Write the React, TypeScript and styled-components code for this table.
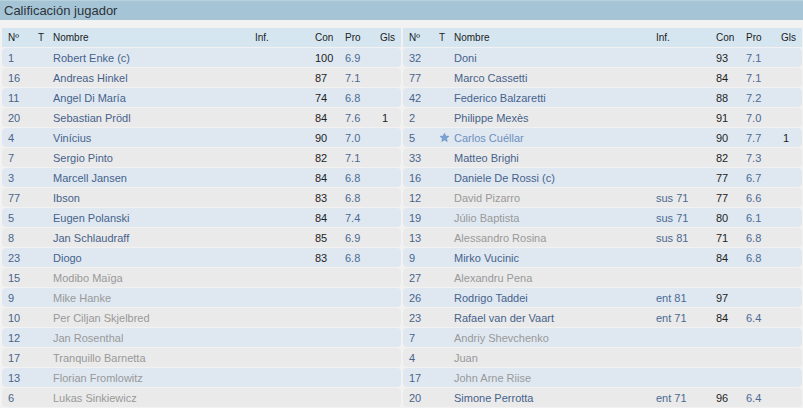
import React from "react";
import styled, { createGlobalStyle } from "styled-components";

const Global = createGlobalStyle`
  html, body { margin: 0; padding: 0; background: #f2f2f2; }
  body { font-family: "Liberation Sans", Arial, sans-serif; }
`;

type Player = {
  n: string;
  name: string;
  inf?: string;
  con?: string;
  pro?: string;
  gls?: string;
  dim?: boolean;
  star?: boolean;
};

const left: Player[] = [
  { n: "1", name: "Robert Enke (c)", con: "100", pro: "6.9" },
  { n: "16", name: "Andreas Hinkel", con: "87", pro: "7.1" },
  { n: "11", name: "Angel Di María", con: "74", pro: "6.8" },
  { n: "20", name: "Sebastian Prödl", con: "84", pro: "7.6", gls: "1" },
  { n: "4", name: "Vinícius", con: "90", pro: "7.0" },
  { n: "7", name: "Sergio Pinto", con: "82", pro: "7.1" },
  { n: "3", name: "Marcell Jansen", con: "84", pro: "6.8" },
  { n: "77", name: "Ibson", con: "83", pro: "6.8" },
  { n: "5", name: "Eugen Polanski", con: "84", pro: "7.4" },
  { n: "8", name: "Jan Schlaudraff", con: "85", pro: "6.9" },
  { n: "23", name: "Diogo", con: "83", pro: "6.8" },
  { n: "15", name: "Modibo Maïga", dim: true },
  { n: "9", name: "Mike Hanke", dim: true },
  { n: "10", name: "Per Ciljan Skjelbred", dim: true },
  { n: "12", name: "Jan Rosenthal", dim: true },
  { n: "17", name: "Tranquillo Barnetta", dim: true },
  { n: "13", name: "Florian Fromlowitz", dim: true },
  { n: "6", name: "Lukas Sinkiewicz", dim: true },
];

const right: Player[] = [
  { n: "32", name: "Doni", con: "93", pro: "7.1" },
  { n: "77", name: "Marco Cassetti", con: "84", pro: "7.1" },
  { n: "42", name: "Federico Balzaretti", con: "88", pro: "7.2" },
  { n: "2", name: "Philippe Mexès", con: "91", pro: "7.0" },
  { n: "5", name: "Carlos Cuéllar", con: "90", pro: "7.7", gls: "1", star: true },
  { n: "33", name: "Matteo Brighi", con: "82", pro: "7.3" },
  { n: "16", name: "Daniele De Rossi (c)", con: "77", pro: "6.7" },
  { n: "12", name: "David Pizarro", inf: "sus 71", con: "77", pro: "6.6", dim: true },
  { n: "19", name: "Júlio Baptista", inf: "sus 71", con: "80", pro: "6.1", dim: true },
  { n: "13", name: "Alessandro Rosina", inf: "sus 81", con: "71", pro: "6.8", dim: true },
  { n: "9", name: "Mirko Vucinic", con: "84", pro: "6.8" },
  { n: "27", name: "Alexandru Pena", dim: true },
  { n: "26", name: "Rodrigo Taddei", inf: "ent 81", con: "97" },
  { n: "23", name: "Rafael van der Vaart", inf: "ent 71", con: "84", pro: "6.4" },
  { n: "7", name: "Andriy Shevchenko", dim: true },
  { n: "4", name: "Juan", dim: true },
  { n: "17", name: "John Arne Riise", dim: true },
  { n: "20", name: "Simone Perrotta", inf: "ent 71", con: "96", pro: "6.4" },
];

const Page = styled.div`
  width: 803px;
  height: 408px;
  overflow: hidden;
  background: #f2f2f2;
`;

const TitleBar = styled.div`
  height: 20px;
  background: #a5c5d7;
  border-top: 1px solid #b7d1df;
  box-sizing: border-box;
  padding-left: 4px;
  display: flex;
  align-items: center;
  font-size: 13px;
  color: #2e3338;
`;

const Columns = styled.div`
  display: flex;
  gap: 2px;
  padding: 8px 1px 0 2px;
`;

const Table = styled.div`
  flex: 1;
  display: flex;
  flex-direction: column;
`;

const Row = styled.div<{ $variant: "head" | "blue" | "grey" }>`
  display: grid;
  grid-template-columns: 30px 15px 202px 60px 30px 35px 1fr;
  align-items: center;
  height: 19px;
  margin-bottom: 1px;
  padding-left: 6px;
  border-radius: ${(p) => (p.$variant === "head" ? "0" : "4px")};
  background: ${(p) =>
    p.$variant === "head" ? "#d5e6f1" : p.$variant === "blue" ? "#dfe8f1" : "#eaeaea"};
  font-size: ${(p) => (p.$variant === "head" ? "10px" : "11px")};
  white-space: nowrap;
`;

const HeadCell = styled.span`
  color: #222;
`;

const Num = styled.span`
  color: #48648c;
`;

const Name = styled.span<{ $dim?: boolean; $star?: boolean }>`
  color: ${(p) => (p.$dim ? "#999" : p.$star ? "#6e8fbe" : "#46628b")};
`;

const Inf = styled.span`
  color: #4a6893;
`;

const Con = styled.span`
  color: #1e1e1e;
`;

const Pro = styled.span`
  color: #4a6893;
`;

const Gls = styled.span`
  color: #1e1e1e;
  padding-left: 2px;
`;

const StarCell = styled.span`
  display: flex;
  align-items: center;
`;

const Star = () => (
  <svg width="11" height="11" viewBox="0 0 24 24">
    <path
      d="M12 2.5l2.9 6.3 6.9.7-5.2 4.6 1.5 6.8L12 17.4l-6.1 3.5 1.5-6.8-5.2-4.6 6.9-.7z"
      fill="#7da3d4"
      stroke="#5f87bd"
      strokeWidth="1"
      strokeLinejoin="round"
    />
  </svg>
);

const PlayerTable = ({ players }: { players: Player[] }) => (
  <Table>
    <Row $variant="head">
      <HeadCell>Nº</HeadCell>
      <HeadCell>T</HeadCell>
      <HeadCell>Nombre</HeadCell>
      <HeadCell>Inf.</HeadCell>
      <HeadCell>Con</HeadCell>
      <HeadCell>Pro</HeadCell>
      <HeadCell>Gls</HeadCell>
    </Row>
    {players.map((p, i) => (
      <Row key={i} $variant={i % 2 === 0 ? "blue" : "grey"}>
        <Num>{p.n}</Num>
        <StarCell>{p.star ? <Star /> : null}</StarCell>
        <Name $dim={p.dim} $star={p.star}>
          {p.name}
        </Name>
        <Inf>{p.inf ?? ""}</Inf>
        <Con>{p.con ?? ""}</Con>
        <Pro>{p.pro ?? ""}</Pro>
        <Gls>{p.gls ?? ""}</Gls>
      </Row>
    ))}
  </Table>
);

export default function App() {
  return (
    <Page>
      <Global />
      <TitleBar>Calificación jugador</TitleBar>
      <Columns>
        <PlayerTable players={left} />
        <PlayerTable players={right} />
      </Columns>
    </Page>
  );
}
